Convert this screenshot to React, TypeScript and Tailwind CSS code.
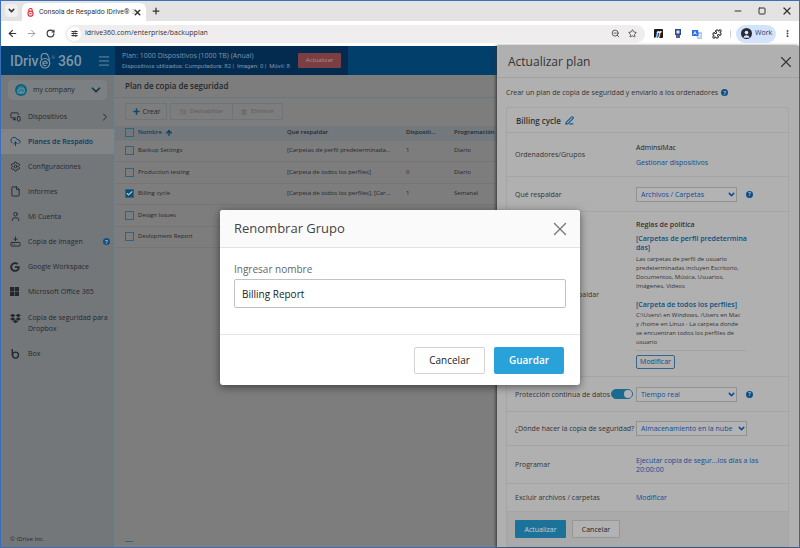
import React, { useState } from "react";
import {
  ArrowLeft, ArrowRight, ArrowUp, Ban, Building2, Check, ChevronDown, ChevronRight, CloudUpload,
  File, HardDriveDownload, Menu, Minus, MonitorSmartphone, MoreVertical, Plus, Puzzle, RotateCw,
  Settings, Square, Star, Trash2, User, X, ZoomOut, PenLine, SlidersHorizontal,
} from "lucide-react";
import { FaDropbox, FaGoogle } from "react-icons/fa";
import { BsMicrosoft } from "react-icons/bs";

const navItems = [
  { label: "Dispositivos", icon: MonitorSmartphone, arrow: true },
  { label: "Planes de Respaldo", icon: CloudUpload, active: true },
  { label: "Configuraciones", icon: Settings },
  { label: "Informes", icon: File },
  { label: "Mi Cuenta", icon: User },
  { label: "Copia de Imagen", icon: HardDriveDownload, help: true },
];

const plans = [
  { name: "Backup Settings", what: "[Carpetas de perfil predeterminada...", devices: "1", schedule: "Diario" },
  { name: "Production testing", what: "[Carpeta de todos los perfiles]", devices: "0", schedule: "Diario" },
  { name: "Billing cycle", what: "[Carpeta de todos los perfiles], [Car...", devices: "1", schedule: "Semanal", checked: true },
  { name: "Design Issues", what: "", devices: "", schedule: "" },
  { name: "Devlopment Report", what: "", devices: "", schedule: "" },
];

function Help() {
  return (
    <span className="flex size-[7px] shrink-0 items-center justify-center rounded-full bg-[#0d4f8b] text-[6px] leading-none font-bold text-[#b0b0b0]">
      ?
    </span>
  );
}

function LockE() {
  return (
    <svg viewBox="0 0 24 32" className="h-4 w-3" fill="none" stroke="currentColor">
      <path d="M4.500 13V8.500a7 7 0 0 1 14-1.500c1.500 2 2.500 4 2.500 8" strokeWidth="2.200" />
      <circle cx="12" cy="20.500" r="9.500" strokeWidth="2.400" />
      <path d="M8 20.500h8.500a4.500 4.500 0 1 0-1.500 3.600" strokeWidth="2.200" />
    </svg>
  );
}

function BoxIcon() {
  return (
    <svg viewBox="0 0 24 24" className="size-[11px]" fill="none" stroke="currentColor" strokeWidth="3">
      <path d="M5 2v14" />
      <circle cx="12" cy="15.500" r="6.500" />
    </svg>
  );
}

function Tick({ label, checked = false }: { label: string; checked?: boolean }) {
  return (
    <span className="relative block size-[9px]">
      <input
        type="checkbox"
        aria-label={label}
        defaultChecked={checked}
        className="peer block size-[9px] appearance-none border border-[#2b6580] checked:bg-[#0a4f74]"
      />
      <Check className="pointer-events-none absolute inset-px hidden size-[7px] text-[#b5c5cc] peer-checked:block" strokeWidth={4} />
    </span>
  );
}

function Drop({ label, options, width }: { label: string; options: string[]; width: string }) {
  return (
    <span className={"relative flex items-center " + width}>
      <select aria-label={label} className="h-[15px] w-full appearance-none border border-[#929292] bg-[#b3b3b3] pl-1 text-[7px] leading-[9px] text-[#0f4c97]">
        {options.map((o) => <option key={o}>{o}</option>)}
      </select>
      <ChevronDown className="pointer-events-none absolute right-px size-[9px] text-[#0f4c97]" strokeWidth={4} />
    </span>
  );
}

function Row({ label, extra, height, children }: { label: string; extra?: React.ReactNode; height: string; children: React.ReactNode }) {
  return (
    <div className={"flex items-center border-b border-[#a5a5a5] pl-2 " + height}>
      <div className="flex w-[121px] shrink-0 items-center gap-px whitespace-nowrap">{label}{extra}</div>
      {children}
    </div>
  );
}

function BrowserBar() {
  return (
    <header className="shrink-0 text-[#333]">
      <div className="flex h-5 items-end bg-[#e3e3e3] pl-1">
        <button aria-label="Buscar pestañas" className="mb-1 flex size-[13px] items-center justify-center rounded bg-[#f0f0f0]">
          <ChevronDown className="size-[9px]" strokeWidth={4} />
        </button>
        <div className="ml-1 flex h-[18px] w-[124px] items-center rounded-t-md bg-white pl-[5px]">
          <span className="mr-[5px] text-[#e0303a]"><svg viewBox="0 0 24 32" className="h-[9px] w-[7px]" fill="none" stroke="currentColor" strokeWidth="4"><path d="M6 13V9a6 6 0 0 1 12-2v6" /><circle cx="12" cy="20" r="9" /><path d="M8 20h8" /></svg></span>
          <span className="w-[92px] shrink-0 font-['Roboto',sans-serif] text-[7px] whitespace-nowrap">Consola de Respaldo IDrive®<span className="text-[#bbb]"> 3</span></span>
          <button aria-label="Cerrar pestaña" className="ml-[2px]"><X className="size-[9px]" strokeWidth={4} /></button>
        </div>
        <button aria-label="Nueva pestaña" className="mb-[5px] ml-[5px]"><Plus className="size-[10px]" strokeWidth={3} /></button>
        <div className="mb-1 ml-auto flex items-center gap-[15px] pr-[6px]">
          <button aria-label="Minimizar"><Minus className="size-[10px]" strokeWidth={2.5} /></button>
          <button aria-label="Maximizar"><Square className="size-2" strokeWidth={3} /></button>
          <button aria-label="Cerrar"><X className="size-3" strokeWidth={2.5} /></button>
        </div>
      </div>
      <div className="flex h-[25px] items-center bg-white pl-[6px]">
        <button aria-label="Atrás"><ArrowLeft className="size-[11px]" strokeWidth={2.5} /></button>
        <button aria-label="Adelante" className="ml-2 text-[#999]"><ArrowRight className="size-[11px]" strokeWidth={2} /></button>
        <button aria-label="Recargar" className="ml-[9px]"><RotateCw className="size-[9px]" strokeWidth={3} /></button>
        <div className="ml-[10px] flex h-[18px] flex-1 items-center rounded-full bg-[#efedee] pr-2 pl-[2px]">
          <span className="flex size-[14px] items-center justify-center rounded-full bg-white"><SlidersHorizontal className="size-[7px]" strokeWidth={4} /></span>
          <input aria-label="Dirección" defaultValue="idrive360.com/enterprise/backupplan" className="ml-1 min-w-0 flex-1 text-[7px] outline-none" />
          <ZoomOut className="size-[9px]" strokeWidth={2} />
          <Star className="ml-2 size-[9px]" strokeWidth={2} />
        </div>
        <span className="ml-[9px] flex size-[9px] items-center justify-center rounded-[1px] bg-[#1b1b1b] text-[7px] leading-none font-bold text-white italic">ff</span>
        <svg viewBox="0 0 10 10" className="ml-[10px] size-[10px]"><path d="M2 0h6v6H2z" fill="#244b93" /><path d="M3.500 1.500h3v3h-3z" fill="#e4e9f5" /><path d="M3 6h4v3H3z" fill="#6a5a80" /></svg>
        <svg viewBox="0 0 10 10" className="ml-[9px] size-[10px]"><path d="M4 3h6v7H5z" fill="#b5c9e8" /><path d="M0 1h6l1 6H0z" fill="#2f6fe4" /><path d="m1.500 5.500 1.500-3 1.500 3M2 4.500h2M6 6h3M7.500 5v1c0 1-1 2-1.500 2.500M7 7l2 1.500" stroke="#fff" strokeWidth=".700" fill="none" /></svg>
        <Puzzle className="ml-[10px] size-[10px]" strokeWidth={2.5} />
        <span className="mr-[5px] ml-2 h-2 w-px bg-[#c7d3ea]" />
        <button className="flex h-[18px] w-10 items-center gap-[3px] rounded-full bg-[#d3e3fd] pl-[5px] text-[7px] text-[#1f3767]">
          <svg viewBox="0 0 12 12" className="size-[11px]"><circle cx="6" cy="6" r="6" fill="#272b33" /><circle cx="6" cy="5" r="2" fill="#dce6f8" /><path d="M2.500 10.500a3.700 3.700 0 0 1 7 0z" fill="#dce6f8" /></svg>
          Work
        </button>
        <button aria-label="Menú" className="mx-[7px]"><MoreVertical className="size-[9px]" strokeWidth={3} /></button>
      </div>
    </header>
  );
}

function Sidebar() {
  const item = "flex h-[25px] items-center pl-[9px] text-[7px] leading-[11px]";
  return (
    <nav className="flex w-[114px] shrink-0 flex-col border-r border-[#6f8187] bg-[#74777a] text-[#25282b]">
      <button className="mx-[7px] mt-[5px] mb-1 flex h-5 shrink-0 items-center rounded-sm bg-[#7c8083] pl-[7px] text-[7px]">
        <span className="flex size-3 items-center justify-center rounded-full bg-[#0e627d] text-[#84aab5]"><Building2 className="size-2" /></span>
        <span className="ml-[6px]">my company</span>
        <ChevronDown className="mr-1 ml-auto size-[14px] text-[#12344d]" strokeWidth={3} />
      </button>
      {navItems.map(({ label, icon: Icon, arrow, active, help }) => (
        <a href="#" key={label} className={item + (active ? " bg-[#828486] font-semibold text-[#0b3a63]" : " font-medium")}>
          <Icon className="size-[11px]" strokeWidth={2} />
          <span className="ml-[7px]">{label}</span>
          {arrow && <ChevronRight className="mr-[3px] ml-auto size-3" strokeWidth={2} />}
          {help && <span className="mr-1 ml-auto"><Help /></span>}
        </a>
      ))}
      <a href="#" className={item + " font-medium"}><FaGoogle className="size-[10px]" /><span className="ml-2">Google Workspace</span></a>
      <a href="#" className={item + " font-medium"}><BsMicrosoft className="size-[9px]" /><span className="ml-[9px]">Microsoft Office 365</span></a>
      <a href="#" className="flex h-[37px] items-center pl-[9px] text-[7px] leading-[11px] font-medium"><FaDropbox className="mb-2 size-[11px] shrink-0" /><span className="ml-[7px]">Copia de seguridad para Dropbox</span></a>
      <a href="#" className={item + " font-medium"}><BoxIcon /><span className="ml-[7px]">Box</span></a>
      <footer className="mt-auto mb-[3px] pl-[9px] text-[6px]">© IDrive Inc.</footer>
    </nav>
  );
}

function PlansPage() {
  return (
    <main className="flex min-w-0 flex-1 flex-col bg-[#7d7d7d] text-[#25282b]">
      <h1 className="flex h-[23px] shrink-0 items-center border-b border-[#687780] pl-[10px] text-[8px] font-semibold">Plan de copia de seguridad</h1>
      <div className="flex px-[10px] pt-[5px] pb-[6px] text-[6px] leading-[9px] font-medium">
        <button className="mr-[3px] flex h-[17px] w-[42px] items-center justify-center gap-[2px] border border-[#6c7579] text-[7px]"><Plus className="size-[9px] text-[#0c4a6e]" strokeWidth={4} />Crear</button>
        <button className="flex h-[17px] w-[63px] items-center justify-center gap-1 border border-[#6c7579] text-[#5c5c5c]"><Ban className="size-[6px]" />Deshabilitar</button>
        <button className="-ml-px flex h-[17px] w-[51px] items-center justify-center gap-1 border border-[#6c7579] text-[#5c5c5c]"><Trash2 className="size-[6px]" />Eliminar</button>
      </div>
      <table className="w-full table-fixed text-left text-[6px] leading-[9px] font-medium whitespace-nowrap">
        <thead>
          <tr className="h-[14px] border-b border-[#6f7b80] bg-[#73787c]">
            <th className="w-[23px] pl-[10px]"><Tick label="Seleccionar todo" /></th>
            <th className="w-[149px] font-semibold text-[#0b3f63]"><span className="flex items-center gap-[3px]">Nombre <ArrowUp className="size-2" strokeWidth={4} /></span></th>
            <th className="w-[119px] font-semibold">Qué respaldar</th>
            <th className="w-12 font-semibold">Dispositi...</th>
            <th className="font-semibold">Programación</th>
          </tr>
        </thead>
        <tbody>
          {plans.map((p) => (
            <tr key={p.name} className="border-b border-[#757575] odd:h-[21px] even:h-[22px]">
              <td className="pl-[10px]"><Tick label={p.name} checked={p.checked} /></td>
              <td>{p.name}</td><td>{p.what}</td><td>{p.devices}</td><td>{p.schedule}</td>
            </tr>
          ))}
        </tbody>
      </table>
      <div className="mt-auto mb-[5px] ml-[10px] h-px w-2 bg-[#395f76]" />
    </main>
  );
}

function PlanDrawer() {
  const link = "text-[#0f4c97]";
  return (
    <aside className="z-10 flex w-[302px] shrink-0 flex-col bg-[#b0b0b0] text-[7px] leading-[9px] text-[#333] shadow-[-1px_0_3px_#333]">
      <div className="flex h-8 shrink-0 items-center border-b border-[#a2a2a2] pr-1 pl-[11px]">
        <h2 className="text-[12px] leading-none">Actualizar plan</h2>
        <button aria-label="Cerrar panel" className="ml-auto"><X className="size-[18px]" strokeWidth={1.5} /></button>
      </div>
      <p className="flex h-[29px] shrink-0 items-center gap-[3px] pl-[9px]">Crear un plan de copia de seguridad y enviarlo a los ordenadores <Help /></p>
      <section className="mr-[10px] ml-[9px] rounded-[2px] border border-[#a6a6a6]">
        <h3 className="flex h-[25px] items-center gap-1 border-b border-[#a5a5a5] pl-[9px] text-[8px] font-semibold">Billing cycle <PenLine className="size-[9px] text-[#0d5c8d]" strokeWidth={3} /></h3>
        <Row label="Ordenadores/Grupos" height="h-11"><div className="flex flex-col gap-[6px]"><span className="text-[#222]">AdminsiMac</span><a href="#" className={link}>Gestionar dispositivos</a></div></Row>
        <Row label="Qué respaldar" height="h-[35px]"><Drop label="Qué respaldar" options={["Archivos / Carpetas"]} width="w-[101px] mr-[9px]" /><Help /></Row>
        <Row label="Elementos para respaldar" height="h-[165px]">
          <div className="w-[110px]">
            <h4 className="mb-[5px] font-semibold">Reglas de política</h4>
            <h5 className="mb-[3px] font-semibold whitespace-nowrap text-[#0c4f80]">[Carpetas de perfil predetermina<br />das]</h5>
            <p className="mb-[9px] text-[6px] font-medium">Las carpetas de perfil de usuario predeterminadas incluyen Escritorio, Documentos, Música, Usuarios, Imágenes, Videos</p>
            <h5 className="mb-[2px] font-semibold text-[#0c4f80]">[Carpeta de todos los perfiles]</h5>
            <p className="border-b border-[#a2a2a2] pb-[3px] text-[6px] font-medium">C:\Users\ en Windows, /Users en Mac<br />y /home en Linux - La carpeta donde<br />se encuentran todos los perfiles de<br />usuario</p>
            <button className="mt-1 h-[14px] w-[39px] rounded-[2px] border border-[#33668a] text-[#0f4c80]">Modificar</button>
          </div>
        </Row>
        <Row label="Protección continua de datos" height="h-[35px]" extra={
          <input type="checkbox" role="switch" defaultChecked aria-label="Protección continua de datos" className="flex h-[10px] w-[22px] appearance-none items-center justify-end rounded-full border border-[#1b6b90] bg-[#1b6b90] after:size-2 after:rounded-full after:bg-[#b3b3b3]" />
        }><Drop label="Frecuencia de protección" options={["Tiempo real"]} width="w-[101px] mr-[9px]" /><Help /></Row>
        <Row label="¿Dónde hacer la copia de seguridad?" height="h-[34px]"><Drop label="Destino de la copia" options={["Almacenamiento en la nube"]} width="w-[111px]" /></Row>
        <Row label="Programar" height="h-[38px]"><a href="#" className={link}>Ejecutar copia de segur...los días a las<br />20:00:00</a></Row>
        <Row label="Excluir archivos / carpetas" height="h-[28px]"><a href="#" className={link}>Modificar</a></Row>
        <div className="flex h-[34px] items-center gap-[6px] bg-[#aaaaaa] pl-2">
          <button className="h-[18px] w-[51px] rounded-[1px] bg-[#1c7299] text-[#c3d1d8]">Actualizar</button>
          <button className="h-[18px] w-12 rounded-[1px] border border-[#969696] bg-[#b2b2b2] text-[#222]">Cancelar</button>
        </div>
      </section>
    </aside>
  );
}

function RenameDialog() {
  const [name, setName] = useState("Billing Report");
  return (
    <div className="absolute inset-0 z-20 flex items-center justify-center pt-[2px]">
      <div role="dialog" aria-labelledby="rename-title" className="w-[360px] overflow-hidden rounded-[3px] bg-white shadow-[0_2px_8px_rgba(0,0,0,0.5)]">
        <div className="flex h-[38px] items-center border-b border-[#e3e3e3] bg-[#fafafa] pr-[9px] pl-[14px]">
          <h2 id="rename-title" className="text-[13px] leading-none text-[#444]">Renombrar Grupo</h2>
          <button aria-label="Cerrar" className="ml-auto text-[#777]"><X className="size-[22px]" strokeWidth={1.5} /></button>
        </div>
        <div className="px-[14px] pt-[14px] pb-[26px]">
          <label htmlFor="group-name" className="block text-[10px] leading-[14px] text-[#666]">Ingresar nombre</label>
          <input id="group-name" value={name} onChange={(e) => setName(e.target.value)} className="mt-[3px] h-[29px] w-full rounded-[2px] border border-[#c2c2c2] px-[7px] text-[10px] text-[#222] outline-none" />
        </div>
        <div className="flex h-[51px] items-center justify-end gap-[9px] border-t border-[#e6e6e6] pr-4 text-[10px]">
          <button className="h-[27px] w-[71px] rounded-[2px] border border-[#d4d4d4] text-[#222]">Cancelar</button>
          <button className="h-[27px] w-[70px] rounded-[2px] bg-[#28a2d8] font-semibold text-white">Guardar</button>
        </div>
      </div>
    </div>
  );
}

export default function App() {
  return (
    <div className="flex min-h-screen flex-col border border-[#3c6fb9] bg-white font-['Open_Sans','Noto_Sans',sans-serif]">
      <BrowserBar />
      <div className="relative flex flex-1">
        <div className="flex min-w-0 flex-1 flex-col">
          <header className="flex h-[29px] shrink-0 bg-[#023f6a] text-[#7f95a6]">
            <div className="flex w-[114px] shrink-0 items-center pl-[9px]">
              <span className="font-['Roboto',sans-serif] text-[14px] leading-none font-medium">IDriv</span>
              <LockE />
              <span className="mb-[6px] ml-px text-[4px]">®</span>
              <span className="ml-[3px] font-['Roboto',sans-serif] text-[14px] leading-none font-medium">360</span>
              <button aria-label="Menú lateral" className="mr-1 ml-auto"><Menu className="size-[14px]" strokeWidth={1.5} /></button>
            </div>
            <div className="flex w-[233px] items-center justify-between bg-[#032b50] pr-[7px] pl-[7px] whitespace-nowrap">
              <div>
                <p className="text-[7px] leading-[11px] font-medium">Plan: 1000 Dispositivos (1000 TB) (Anual)</p>
                <p className="font-['Roboto',sans-serif] text-[6px] leading-[10px]">Dispositivos utilizados: Computadora: 82 |&nbsp; Imagen: 0 |&nbsp; Móvil: 8</p>
              </div>
              <button className="h-[15px] w-[43px] rounded-[1px] bg-[#7b3f43] text-[6px] text-[#ad9094]">Actualizar</button>
            </div>
          </header>
          <div className="flex flex-1">
            <Sidebar />
            <PlansPage />
          </div>
        </div>
        <PlanDrawer />
        <RenameDialog />
      </div>
    </div>
  );
}
